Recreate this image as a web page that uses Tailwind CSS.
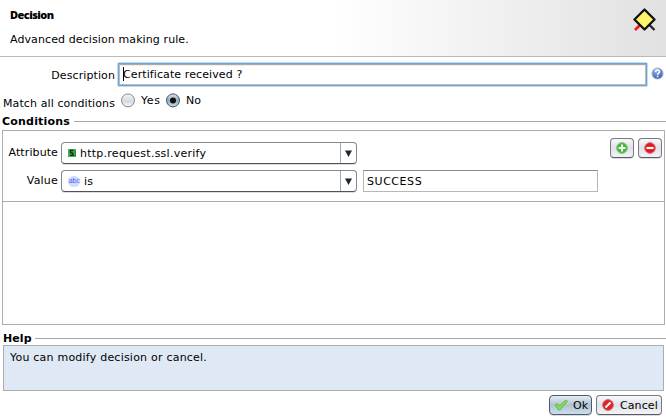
<!DOCTYPE html>
<html lang="en">
<head>
<meta charset="utf-8">
<title>Decision</title>
<script src="https://cdn.jsdelivr.net/npm/@tailwindcss/browser@4"></script>
</head>
<body class="w-[666px] h-[418px] overflow-hidden bg-white text-black font-['DejaVu_Sans',sans-serif] text-[11px] leading-[14px] whitespace-nowrap">
<header class="h-[57px] border-b border-[#b8b8b8] flex justify-between bg-linear-to-r from-white from-50% to-[#e1e1e1]">
  <div class="pl-[10px] pt-[8px]">
    <h1 class="font-extrabold font-['Open_Sans',sans-serif] text-[11px] tracking-[-0.55px]">Decision</h1>
    <p class="mt-[11px] tracking-[0.1px]">Advanced decision making rule.</p>
  </div>
  <svg class="mt-[7px] mr-[9px]" width="24" height="26" viewBox="0 0 24 26">
    <path d="M7.500 17.500L2 23" stroke="#fa1717" stroke-width="2.600"/>
    <path d="M16 17.500L21.500 23" stroke="#222" stroke-width="2.300"/>
    <path d="M11.500 2.500L21.500 12.500L11.500 22.500L1.500 12.500Z" fill="#fff568" stroke="#111" stroke-width="2.300" stroke-linejoin="round"/>
  </svg>
</header>
<main>
  <div class="flex h-[34px] pt-[5px]">
    <label class="w-[115px] text-right pt-[7px] tracking-[0.1px]">Description</label>
    <div class="ml-[2px] w-[531px] h-[25px] border border-[#c0dcf4] rounded-[2px]">
      <div class="h-full border border-[#73a4d1]">
        <div class="h-full border border-[#bbb] border-t-[#aaa] shadow-[inset_0_1px_0_#eee] flex items-start pl-[3px] pt-[2px]">
          <span class="w-px h-[14px] bg-black"></span><span class="-ml-px pt-px tracking-[0.1px]">Certificate received ?</span>
        </div>
      </div>
    </div>
    <svg class="ml-[3px] mt-[5px]" width="13" height="13" viewBox="0 0 13 13">
      <defs><radialGradient id="hb" cx=".4" cy=".25" r=".8"><stop stop-color="#9bbcf0"/><stop offset="1" stop-color="#2857b4"/></radialGradient></defs>
      <circle cx="6.500" cy="6.500" r="5.600" fill="url(#hb)" stroke="#b9bfca"/>
      <path d="M4.500 5C4.500 2.500 8.700 2.500 8.600 4.900C8.500 6.300 6.600 6.200 6.600 7.800M6.600 8.800V10.200" fill="none" stroke="#fff" stroke-width="1.500"/>
    </svg>
  </div>
  <div class="flex h-[24px]">
    <span class="w-[115px] text-right pt-[6px] tracking-[0.1px]">Match all conditions</span>
    <svg class="ml-[6px] mt-[2px]" width="14" height="15" viewBox="0 0 14 15">
      <defs><linearGradient id="r1" x2="0" y2="1"><stop stop-color="#f7f7f9"/><stop offset=".55" stop-color="#d8d9de"/><stop offset="1" stop-color="#f4f4f7"/></linearGradient>
      <linearGradient id="r2" x2="0" y2="1"><stop stop-color="#dce5ee"/><stop offset=".5" stop-color="#94aabd"/><stop offset="1" stop-color="#c9dced"/></linearGradient></defs>
      <circle cx="7" cy="7.400" r="6.500" fill="url(#r1)" stroke="#85868d"/>
    </svg>
    <span class="ml-[6px] w-[24px] pt-[3px] tracking-[0.6px]">Yes</span>
    <svg class="ml-px mt-[2px]" width="14" height="15" viewBox="0 0 14 15">
      <circle cx="7" cy="7.400" r="6.500" fill="url(#r2)" stroke="#3d536b"/><circle cx="7" cy="7.400" r="3" fill="#111"/>
    </svg>
    <span class="ml-[6px] pt-[3px]">No</span>
  </div>
  <div class="flex items-start h-[14px] pl-[2px]"><h2 class="w-[72px] font-bold tracking-[0.2px]">Conditions</h2><div class="mt-[6px] flex-1 h-px bg-[#a5a6ad]"></div></div>
  <section class="ml-[2px] mt-px w-[663px] h-[195px] border border-[#adadad]">
    <div class="h-[71px] border-b border-[#adadad] flex">
      <div class="pt-[11px] flex flex-col gap-[6px]">
        <div class="flex h-[22px]">
          <label class="w-[55px] text-right pt-[4px] tracking-[0.1px]">Attribute</label>
          <div class="ml-[3px] w-[296px] border border-[#86868f] border-b-[#50525b] rounded-[4px] shadow-[0_1px_0_#dfdfe2] flex items-center">
            <svg class="ml-[6px]" width="8" height="8" viewBox="0 0 8 8"><rect width="8" height="8" fill="#43ae55"/><path d="M5.500 1.500H2.500V3.700L5 4.300V6.300H2M7.500 2.500V3.500M7.500 5.500V6.500" fill="none" stroke="#102e16" stroke-width="1.300"/></svg>
            <span class="ml-[4px] pt-px flex-1 tracking-[0.25px]">http.request.ssl.verify</span>
            <div class="w-[16px] h-full border-l border-[#9aabba] flex items-center justify-center"><svg width="7" height="7" viewBox="0 0 7 7"><path d="M0 .5H7L3.500 7Z" fill="#202527"/></svg></div>
          </div>
        </div>
        <div class="flex h-[22px]">
          <label class="w-[55px] text-right pt-[4px] tracking-[0.2px]">Value</label>
          <div class="ml-[3px] w-[296px] border border-[#86868f] border-b-[#50525b] rounded-[4px] shadow-[0_1px_0_#dfdfe2] flex items-center">
            <span class="ml-[6px] w-[12px] h-[11px] rounded-full bg-[#d1ddfa] text-[#5558ff] text-[7px] leading-[10px] tracking-[-0.6px] text-center">abc</span>
            <span class="ml-[4px] pt-px flex-1 tracking-[0.3px]">is</span>
            <div class="w-[16px] h-full border-l border-[#9aabba] flex items-center justify-center"><svg width="7" height="7" viewBox="0 0 7 7"><path d="M0 .5H7L3.500 7Z" fill="#202527"/></svg></div>
          </div>
          <div class="ml-[6px] w-[235px] border border-[#b7b7b7] border-t-[#888] pl-[3px] pt-[4px] tracking-[0.55px]">SUCCESS</div>
        </div>
      </div>
      <div class="flex gap-[4px] pt-[7px] ml-[12px]">
        <div class="w-[24px] h-[20px] rounded-[4px] border border-[#777a85] border-b-[#555a66] bg-linear-to-b from-[#f7f8fa] via-[#dfe1e7] to-[#f2f4f8] shadow-[0_1px_0_#ddd] flex items-center justify-center"><svg width="12" height="12" viewBox="0 0 12 12"><circle cx="6" cy="6" r="5.400" fill="#40b93c" stroke="#8fc18d"/><path d="M6 2.500V9.500M2.500 6H9.500" stroke="#f3fff1" stroke-width="2"/></svg></div>
        <div class="w-[24px] h-[20px] rounded-[4px] border border-[#777a85] border-b-[#555a66] bg-linear-to-b from-[#f7f8fa] via-[#dfe1e7] to-[#f2f4f8] shadow-[0_1px_0_#ddd] flex items-center justify-center"><svg width="12" height="12" viewBox="0 0 12 12"><circle cx="6" cy="6" r="5.400" fill="#e5181b" stroke="#d78080"/><path d="M2.500 6H9.500" stroke="#fff" stroke-width="2.200"/></svg></div>
      </div>
    </div>
  </section>
  <div class="flex items-center h-[14px] mt-[6px] pl-[3px]"><h2 class="w-[32px] font-bold pt-px tracking-[0.1px]">Help</h2><div class="flex-1 h-px bg-[#a5a6ad]"></div></div>
  <section class="ml-[3px] w-[661px] h-[46px] border border-[#adadad] bg-[#dfe9f5] pl-[6px] pt-[5px] tracking-[0.22px]">You can modify decision or cancel.</section>
</main>
<footer class="flex justify-end gap-[4px] mt-[4px] pr-[4px]">
  <div class="w-[43px] h-[20px] rounded-[4px] border border-[#465a70] bg-linear-to-b from-[#e5ecf3] via-[#b3c2d0] to-[#cbdeee] shadow-[0_1px_0_#ddd] flex items-center pl-[4px]"><svg width="14" height="12" viewBox="0 0 14 12"><path d="M1 6L3.500 4.500L5.500 7L11.500 1L13.500 2.200L6 11H4.500Z" fill="#7be04f" stroke="#55ad3b" stroke-width=".7"/></svg><span class="ml-[5px] pt-px">Ok</span></div>
  <div class="w-[66px] h-[20px] rounded-[4px] border border-[#777a85] border-b-[#555a66] bg-linear-to-b from-[#f9f9fb] via-[#e0e2e7] to-[#f2f4f8] shadow-[0_1px_0_#ddd] flex items-center pl-[5px]"><svg width="12" height="12" viewBox="0 0 12 12"><circle cx="6" cy="6" r="5.400" fill="#df2226" stroke="#cf7074"/><path d="M3.500 8.500L8.500 3.500" stroke="#fff" stroke-width="2"/></svg><span class="ml-[6px] pt-px tracking-[0.1px]">Cancel</span></div>
</footer>
</body>
</html>
